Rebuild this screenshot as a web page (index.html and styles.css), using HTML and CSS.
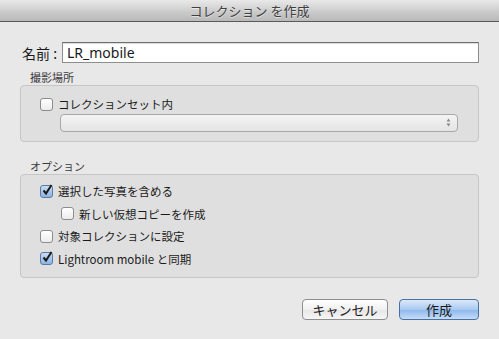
FILE: index.html
```html
<!DOCTYPE html>
<html lang="ja">
<head>
    <meta charset="UTF-8">
    <title>コレクション を作成</title>
    <link rel="stylesheet" href="styles.css">
</head>
<body>
    <div class="dialog">
        <div class="titlebar">コレクション を作成</div>
        <div class="content">
            <div class="name-row">
                <label class="name-label">名前 :</label>
                <div class="name-input">LR_mobile</div>
            </div>

            <div class="section-title">撮影場所</div>
            <div class="group group-place">
                <div class="check-row">
                    <span class="checkbox"></span>
                    <span>コレクションセット内</span>
                </div>
                <div class="popup">
                    <span class="arrows">
                        <svg width="5" height="9" viewBox="0 0 5 9"><path d="M2.5 0.5 L4.5 3.5 L0.5 3.5 Z M2.5 8.5 L4.5 5.5 L0.5 5.5 Z" fill="#8a8a8a"/></svg>
                    </span>
                </div>
            </div>

            <div class="section-title section-options">オプション</div>
            <div class="group group-options">
                <div class="check-row">
                    <span class="checkbox checked"><svg width="12" height="12" viewBox="0 0 12 12"><path d="M2.5 6.5 L5 9.5 L10.5 1" stroke="#1a1a1a" stroke-width="2" fill="none"/></svg></span>
                    <span>選択した写真を含める</span>
                </div>
                <div class="check-row indent">
                    <span class="checkbox"></span>
                    <span>新しい仮想コピーを作成</span>
                </div>
                <div class="check-row">
                    <span class="checkbox"></span>
                    <span>対象コレクションに設定</span>
                </div>
                <div class="check-row">
                    <span class="checkbox checked"><svg width="12" height="12" viewBox="0 0 12 12"><path d="M2.5 6.5 L5 9.5 L10.5 1" stroke="#1a1a1a" stroke-width="2" fill="none"/></svg></span>
                    <span>Lightroom mobile と同期</span>
                </div>
            </div>

            <div class="buttons">
                <button class="button">キャンセル</button>
                <button class="button primary">作成</button>
            </div>
        </div>
    </div>
</body>
</html>
```

FILE: styles.css
```css
body {
    margin: 0;
    font-family: "Noto Sans CJK JP", "DejaVu Sans", sans-serif;
    color: #1a1a1a;
}
.dialog {
    width: 499px;
    height: 339px;
    background-color: #e8e8e8;
    overflow: hidden;
}
.titlebar {
    height: 21px;
    line-height: 21px;
    text-align: center;
    font-size: 13px;
    color: #404040;
    background: linear-gradient(#e9e9e9, #c9c9c9 60%, #b9b9b9);
    border-bottom: 1px solid #5a5a5a;
    text-shadow: 0 1px 0 rgba(255, 255, 255, 0.5);
}
.content {
    padding: 20px 20px 0 20px;
}
.name-row {
    display: flex;
    align-items: center;
    height: 21px;
}
.name-label {
    width: 42px;
    padding-left: 2px;
    font-size: 14px;
    white-space: nowrap;
    box-sizing: border-box;
    flex-shrink: 0;
}
.name-input {
    flex: 1;
    height: 19px;
    line-height: 19px;
    border: 1px solid #8e8e8e;
    border-top-color: #6e6e6e;
    background: #fff;
    padding-left: 4px;
    font-family: "Noto Sans", sans-serif;
    font-size: 14px;
    box-shadow: inset 0 1px 1px rgba(0, 0, 0, 0.15);
}
.section-title {
    font-size: 11px;
    color: #3a3a3a;
    padding-left: 10px;
    margin-top: 6px;
    height: 16px;
    line-height: 16px;
}
.section-options {
    margin-top: 16px;
}
.group {
    background-color: #dfdfdf;
    border: 1px solid #c6c6c6;
    border-radius: 4px;
    box-sizing: border-box;
}
.group-place {
    height: 57px;
    padding: 7px 20px 0 19px;
}
.group-options {
    height: 104px;
    padding: 5px 20px 0 19px;
}
.check-row {
    display: flex;
    align-items: center;
    height: 22.5px;
    font-size: 11.5px;
}
.check-row.indent {
    padding-left: 21px;
}
.checkbox {
    width: 11px;
    height: 11px;
    border: 1px solid #8c8c8c;
    border-radius: 3px;
    background: linear-gradient(#ffffff, #ececec);
    margin-right: 5px;
    position: relative;
    flex-shrink: 0;
}
.checkbox.checked {
    background: linear-gradient(#c9dcf2, #8db3e3);
    border-color: #5a7aa6;
}
.checkbox svg {
    position: absolute;
    left: 0;
    top: -2px;
}
.popup {
    margin-left: 20px;
    margin-top: -2px;
    height: 16px;
    border: 1px solid #a8a8a8;
    border-radius: 4px;
    background: linear-gradient(#f4f4f4, #e4e4e4);
    display: flex;
    justify-content: flex-end;
    align-items: center;
    padding-right: 6px;
}
.arrows {
    display: flex;
}
.buttons {
    display: flex;
    justify-content: flex-end;
    gap: 11px;
    margin-top: 21px;
}
.button {
    height: 21px;
    width: 86px;
    padding: 0;
    font-family: "Noto Sans CJK JP", sans-serif;
    font-size: 13px;
    color: #1a1a1a;
    border: 1px solid #8e8e8e;
    border-radius: 4px;
    background: linear-gradient(#ffffff, #f0f0f0 50%, #e6e6e6 51%, #f6f6f6);
    line-height: 19px;
}
.button.primary {
    width: 80px;
    border-color: #4a6ea6;
    background: linear-gradient(#dbe9fa, #a9c9f2 50%, #8bb6ec 51%, #c6ddf7);
}
```
